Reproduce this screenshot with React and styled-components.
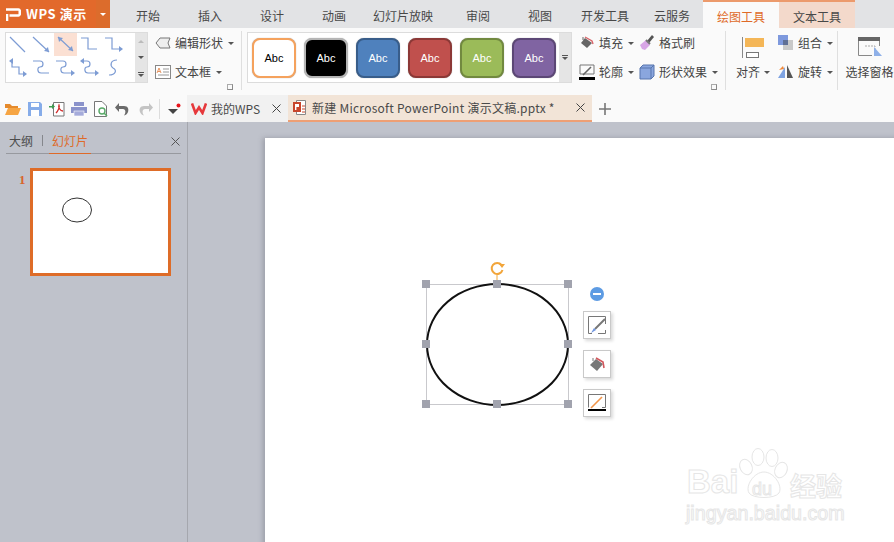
import React from "react";
import styled, { createGlobalStyle } from "styled-components";

const Global = createGlobalStyle`
  html, body { margin: 0; padding: 0; background: #bfc2cb; overflow: hidden; }
  #root { width: 894px; height: 542px; }
  * { box-sizing: border-box; }
`;
const FONT = `"Noto Sans CJK SC", "Noto Sans", sans-serif`;

const Page = styled.div`
  width: 894px; height: 542px; display: flex; flex-direction: column;
  font: 12px/16px ${FONT}; color: #444; overflow: hidden;
`;
const TopBar = styled.div`display: flex; height: 28px; background: #e2e3e5; flex: none;`;
const Logo = styled.div`
  width: 96px; display: flex; align-items: center; gap: 5px; padding-left: 6px;
  background: #e2692b; color: #fff; font: 700 13px/16px ${FONT}; letter-spacing: .55px;
`;
const LogoMenu = styled.div`
  width: 14px; margin-right: 7px; background: #dc6c2c; display: flex; align-items: center; justify-content: center;
`;
const Caret = styled.span`
  display: inline-block; width: 0; height: 0; flex: none;
  border-left: 3px solid transparent; border-right: 3px solid transparent;
  border-top: 3px solid ${p => p.$color || "#555"};
  margin-left: ${p => p.$ml ?? 1}px;
`;
const Tab = styled.div`
  width: ${p => p.$w}px; margin-right: ${p => p.$mr || 0}px; display: flex; align-items: center; justify-content: center;
  padding-top: 3px; color: ${p => p.$active ? "#df6a28" : "#484848"};
  background: ${p => p.$active ? "#fafafa" : p.$ctx ? "#f3d9cb" : "transparent"};
  border-top: ${p => p.$active || p.$ctx ? "2px solid #ec9a6c" : "none"};
`;
const Ribbon = styled.div`
  height: 67px; flex: none; display: flex; align-items: flex-start; background: #fafafa; padding: 3px 0 0 5px;
`;
const Gallery = styled.div`
  margin-top: 1px; height: 51px; display: flex; background: #fff; border: 1px solid #dcdcdc;
  width: ${p => p.$w}px; flex: none; margin-left: ${p => p.$ml || 0}px;
`;
const ShapeGrid = styled.div`
  flex: 1; display: grid; grid-template-columns: repeat(5, 24px); grid-auto-rows: 23px;
`;
const ShapeCell = styled.div`
  width: 23px; height: 23px; background: ${p => p.$on ? "#fbe0d3" : "transparent"};
  display: flex; align-items: center; justify-content: center;
`;
const ScrollCol = styled.div`
  width: 12px; flex: none; background: #e5e5e5; display: flex; flex-direction: column;
  align-items: center; justify-content: ${p => p.$center ? "center" : "space-between"};
  padding: ${p => p.$center ? "0" : "7px 0 5px"}; gap: 1px;
`;
const UpCaret = styled.span`
  width: 0; height: 0; border-left: 3px solid transparent; border-right: 3px solid transparent;
  border-bottom: 3px solid #bbb;
`;
const DownCaret = styled.span`
  width: 0; height: 0; border-left: 3px solid transparent; border-right: 3px solid transparent;
  border-top: 3px solid #555;
`;
const Bar = styled.span`width: 6px; height: 1px; background: #555;`;
const Stack = styled.div`display: flex; flex-direction: column; align-items: center; gap: 1px;`;
const Group = styled.div`
  position: relative; flex: none; height: 59px; width: ${p => p.$w}px; margin-left: ${p => p.$ml || 0}px;
  border-right: ${p => p.$sep ? "1px solid #dfdfdf" : "none"};
`;
const Launcher = styled.span`
  position: absolute; right: ${p => p.$r}px; bottom: 0; width: 6px; height: 6px;
  border: 1px solid #8a8a8a; border-top-color: #aaa; border-left-color: #aaa;
`;
const Rows = styled.div`display: grid; grid-template-columns: ${p => p.$cols}; grid-auto-rows: 24px; row-gap: 5px;`;
const Item = styled.div`display: flex; align-items: center; gap: 4px; white-space: nowrap; color: #444;`;
const PaddedItem = styled(Item)`padding-left: 7px;`;
const StyleRow = styled.div`flex: 1; display: flex; align-items: center; gap: 8px; padding-left: 4px;`;
const StyleBtn = styled.div`
  width: 44px; height: 40px; border-radius: 8px; display: flex; align-items: center; justify-content: center;
  background: ${p => p.$bg}; border: 2.5px solid ${p => p.$bd}; color: ${p => p.$fg};
  font: 11px/14px "Liberation Sans", sans-serif; box-shadow: 0 0 1px #999;
`;
const LargeTool = styled.div`
  display: flex; flex-direction: column; align-items: center; width: ${p => p.$w}px; margin-left: ${p => p.$ml || 0}px; flex: none;
`;
const LargeIcon = styled.div`height: 29px; display: flex; align-items: flex-end; padding-bottom: 2px;`;
const ToolLabel = styled.div`display: flex; align-items: center; height: 24px; white-space: nowrap; color: #444;`;
const AlignRow = styled.div`display: flex; gap: 8px; padding-left: 10px;`;
const DocBar = styled.div`display: flex; height: 27px; flex: none; background: #fafafa; align-items: stretch;`;
const Qat = styled.div`display: flex; align-items: center; gap: 6px; padding-left: 5px; width: 187px; flex: none;`;
const QatSep = styled.span`width: 1px; height: 20px; background: #ddd;`;
const DocTab = styled.div`
  display: flex; align-items: center; width: ${p => p.$w}px; flex: none;
  padding-left: ${p => p.$on ? 5 : 4}px;
  background: ${p => p.$on ? "#f2e4d7" : "#f1f1f1"};
  border-bottom: ${p => p.$on ? "2px solid #ee9f74" : "0"};
  color: #4a4a4a; white-space: nowrap; position: relative;
`;
const DocTitle = styled.span`margin-left: ${p => p.$ml}px; letter-spacing: ${p => p.$ls || 0}px;`;
const CloseBtn = styled.span`position: absolute; right: ${p => p.$r}px; top: 50%; margin-top: -5px; width: 9px; height: 9px; display: flex;`;
const Plus = styled.div`margin-left: 7px; display: flex; align-items: center;`;
const Work = styled.div`flex: 1; display: flex; background: #bfc2cb; min-height: 0;`;
const Side = styled.div`width: 188px; flex: none; border-right: 1px solid #a5a7ae; padding: 9px 6px 0 6px;`;
const SideTabs = styled.div`display: flex; align-items: center; height: 23px; border-bottom: 1px solid #97999f; position: relative;`;
const SideTab = styled.div`
  color: ${p => p.$on ? "#df6a28" : "#4c4c4c"}; height: 23px; line-height: 20px; padding: 0 3px;
  border-bottom: ${p => p.$on ? "1px solid #df6a28" : "0"}; margin-bottom: ${p => p.$on ? "-1px" : "0"};
`;
const SideDiv = styled.span`width: 1px; height: 11px; background: #85878c; margin: 0 6px 3px;`;
const Thumbs = styled.div`display: flex; align-items: flex-start; margin-top: 14px; padding-left: 13px;`;
const ThumbNo = styled.div`font: 700 13px/24px "Liberation Serif", serif; color: #d8642a; width: 11px;`;
const Thumb = styled.div`
  width: 141px; height: 108px; background: #fff; border: 3px solid #de6c28; padding: 26px 0 0 29px;
`;
const Canvas = styled.div`flex: 1; padding: 16px 0 0 77px; overflow: hidden;`;
const Slide = styled.div`
  width: 640px; height: 500px; background: #fff; position: relative; box-shadow: -2px 0 5px rgba(90,90,100,.35);
`;
const Shape = styled.div`position: absolute; left: ${426-265}px; top: ${284-138}px; width: 143px; height: 121px; border: 1px solid #c9c9cd;`;
const Ellipse = styled.div`position: absolute; inset: -2px -1px; border-radius: 50%; border: 2px solid #111;`;
const HandleLayer = styled.div`position: absolute; inset: -1px 0 0 -1px;`;
const Handle = styled.span`
  position: absolute; width: 8px; height: 8px; background: #a1a3ae;
  left: calc(${p => p.$x}% - 4px); top: calc(${p => p.$y}% - 4px);
`;
const RotateWrap = styled.div`position: absolute; left: 61px; top: -27px; width: 18px; height: 27px;`;
const Float = styled.div`position: absolute; left: ${583-265}px; top: ${287-138}px; width: 28px; display: flex; flex-direction: column; align-items: center;`;
const MinusBtn = styled.div`width: 14px; height: 14px; border-radius: 50%; background: #5d9be3; display: flex; align-items: center; justify-content: center; margin-bottom: 10px;`;
const MinusBar = styled.span`width: 8px; height: 2px; background: #fff;`;
const FloatBtn = styled.div`
  width: 28px; height: 28px; margin-bottom: 11px; background: #fff; border: 1px solid #c9c9c9;
  box-shadow: 2px 2px 3px rgba(0,0,0,.15); display: flex; align-items: center; justify-content: center;
`;
const Mark = styled.div`
  position: absolute; left: ${684-265}px; top: ${444-138}px; width: 165px; height: 82px; pointer-events: none;
  color: #fff; -webkit-text-stroke: 1px #e6e6e6;
`;
const MarkText = styled.span`
  position: absolute; left: ${p => p.$x}px; top: ${p => p.$y}px; white-space: nowrap;
  font: ${p => p.$w || 700} ${p => p.$s}px/1 ${p => p.$cjk ? FONT : '"Liberation Sans", sans-serif'};
`;
const MarkPaw = styled.svg`position: absolute; left: 0; top: 0;`;

const Ico = ({ w = 16, h = 16, children }) => <svg width={w} height={h} viewBox={`0 0 ${w} ${h}`} style={{ display: "block", flex: "none" }}>{children}</svg>;

const B = "#7d9cd4";
const Arrow = ({ x, y, dir }) => {
  const d = { r: `${x},${y} ${x-4},${y-3} ${x-4},${y+3}`, se: `${x},${y} ${x-5},${y-1} ${x-1},${y-5}`, nw: `${x},${y} ${x+5},${y+1} ${x+1},${y+5}`, l: `${x},${y} ${x+4},${y-3} ${x+4},${y+3}` }[dir];
  return <polygon points={d} fill={B} />;
};
const shapes = [
  { p: "M4 4L19 19" },
  { p: "M3 4L19 19", a: [{ x: 19, y: 19, dir: "se" }] },
  { p: "M4 4L19 18", a: [{ x: 19, y: 18, dir: "se" }, { x: 4, y: 4, dir: "nw" }], on: true },
  { p: "M3 5H10V16H19" },
  { p: "M3 5H10V16H17", a: [{ x: 21, y: 16, dir: "r" }] },
  { p: "M6 5V11H13V18H17", a: [{ x: 3, y: 5, dir: "l" }, { x: 21, y: 18, dir: "r" }] },
  { p: "M3 5H10C14 5 14 11 10 11C7 11 7 17 11 17H19" },
  { p: "M2 5H9C13 5 13 11 9 11C6 11 6 17 10 17H17", a: [{ x: 21, y: 17, dir: "r" }] },
  { p: "M5 5H9C13 5 13 11 9 11C6 11 6 17 10 17H17", a: [{ x: 2, y: 5, dir: "l" }, { x: 21, y: 17, dir: "r" }] },
  { p: "M15 4C8 4 8 10 11 12C15 14 14 19 7 19" },
];
const ShapeIcon = ({ p, a = [] }) => (
  <Ico w={23} h={23}><path d={p} fill="none" stroke={B} strokeWidth="1.2" />{a.map((v, i) => <Arrow key={i} {...v} />)}</Ico>
);

const X = ({ c = "#444" }) => <Ico w={9} h={9}><path d="M.5 .5L8.5 8.5M8.5 .5L.5 8.5" stroke={c} strokeWidth="1" /></Ico>;

const styles = [
  ["#fff", "#f5a25d", "#000"], ["#000", "#b5b5b5", "#fff"], ["#4f81bd", "#385d8a", "#fff"],
  ["#c0504d", "#8c3836", "#fff"], ["#9bbb59", "#71893f", "#fff"], ["#8064a2", "#5c4776", "#fff"],
];

const FillIcon = () => <Ico><path d="M6 3L13 8L8 13L2 8Z" fill="#666" /><path d="M6 2L13 6L14 9" fill="none" stroke="#d9656a" strokeWidth="1.4" /><path d="M4 5V2" stroke="#666" /></Ico>;
const OutlineIcon = () => <Ico><path d="M1 1H15V10H1Z" fill="none" stroke="#777" /><path d="M4 11L12 3" stroke="#666" strokeWidth="1.6" /><rect y="13" width="16" height="3" fill="#000" /></Ico>;
const BrushIcon = () => <Ico><path d="M1 10L7 5L11 10L6 15L3 14Z" fill="#d8a6e6" /><path d="M8 6L10 8L15 2L13 0Z" fill="#555" /><path d="M7 5L11 9" stroke="#777" strokeWidth="2" /></Ico>;
const CubeIcon = () => <Ico><path d="M1 4L4 1H15V12L12 15H1Z" fill="#8aa6de" stroke="#5775ad" /><path d="M1 4H12V15M12 4L15 1" fill="none" stroke="#5775ad" /></Ico>;
const AlignIcon = () => <Ico w={22} h={21}><path d="M.5 0V21" stroke="#888" /><rect x="3" y="1" width="19" height="9" fill="#f4b657" /><rect x="4.5" y="15.5" width="12" height="5" fill="#fff" stroke="#777" /></Ico>;
const GroupIcon = () => <Ico><rect x="0" y="0" width="10" height="10" fill="#7e99dd" /><rect x="5" y="5" width="10" height="10" fill="#c9c9c9" /><rect x="5" y="5" width="5" height="5" fill="#5f6f95" /></Ico>;
const RotateIcon = () => <Ico><path d="M0 14L7 3V14Z" fill="#7ea3e2" /><path d="M9 1L15 14H9Z" fill="#555" /><path d="M1 6L5 2L6 5Z" fill="#f08a3c" /></Ico>;
const PaneIcon = () => <Ico w={24} h={21}><rect x="0" y="0" width="22" height="4" fill="#666" /><path d="M.5 4V18.5H14M21.5 4V9" fill="none" stroke="#888" /><path d="M7 9H17V16" fill="none" stroke="#aaa" strokeDasharray="2 1" /><path d="M16 10L24 19H16Z" fill="#8fb0e8" /></Ico>;

const OpenIcon = () => <Ico><path d="M0 3H5L7 5H13V7H0Z" fill="#e58a2c" /><path d="M0 14L3 7H16L13 14Z" fill="#f6a544" /></Ico>;
const SaveIcon = () => <Ico><path d="M1 1H13L15 3V15H1Z" fill="#86ace9" /><rect x="4" y="2" width="8" height="4" fill="#fff" /><rect x="4" y="9" width="8" height="6" fill="#fff" /></Ico>;
const PdfIcon = () => <Ico><path d="M4.5 1.5H15V15H4.5Z" fill="#fff" stroke="#777" /><path d="M7 12C9 10 11 6 10 4C9 6 11 10 14 10" fill="none" stroke="#d22c2c" strokeWidth="1.3" /><path d="M0 5H3V3L6 5.5L3 8V6.5H0Z" fill="#3d9b50" /></Ico>;
const PrintIcon = () => <Ico><rect x="3" y="1" width="10" height="4" fill="#8b93cb" /><rect x="0" y="6" width="16" height="6" fill="#8b93cb" /><rect x="3" y="10" width="10" height="5" fill="#a5abda" stroke="#fff" strokeWidth=".6" /></Ico>;
const PreviewIcon = () => <Ico><path d="M1.5 .5H9L13.5 5V15.5H1.5Z" fill="#fff" stroke="#777" /><circle cx="9" cy="10" r="3" fill="none" stroke="#59a968" strokeWidth="1.4" /><path d="M11 12L14 15" stroke="#59a968" strokeWidth="1.6" /></Ico>;
const UndoPath = ({ c }) => <path d="M4 5H9C13 5 14 8 13 11C12.6 12.5 11 14 9 14.5C11 12 11 8 8 8H4V11L0 6.5L4 2Z" fill={c} />;
const UndoIcon = ({ c }) => <Ico><UndoPath c={c} /></Ico>;
const RedoIcon = ({ c }) => <Ico><g transform="translate(16 0) scale(-1 1)"><UndoPath c={c} /></g></Ico>;
const QatMenu = () => <Ico w={15} h={12}><path d="M2 6H12L7 11Z" fill="#444" /><circle cx="12.5" cy="2.5" r="2" fill="#e8141c" /></Ico>;
const WpsLogo = () => <Ico w={16} h={13}><path d="M1 1.5L4.5 11L8 5.5L11.5 11L15 1.5" fill="none" stroke="#e6383b" strokeWidth="2.6" /></Ico>;
const PptIcon = () => <Ico w={13} h={15}><path d="M3.5 .5H12.5V14.5H3.5Z" fill="#fff" stroke="#888" /><rect x="0" y="2" width="8" height="10" fill="#c8452b" /><rect x="2" y="4" width="4" height="3" fill="#fff" /><rect x="2" y="4" width="1.4" height="6" fill="#fff" /><path d="M9 6H12M9 9H12M9 12H12" stroke="#c8452b" /></Ico>;
const EditShapeIcon = () => <Ico w={16} h={14}><path d="M1 7L5 2H15L13 7L15 12H5Z" fill="#eee" stroke="#777" /></Ico>;
const TextBoxIcon = () => <Ico w={16} h={14}><rect x=".5" y=".5" width="15" height="13" fill="#fff" stroke="#888" /><path d="M2 8L4 3L6 8M3 6.5H5" fill="none" stroke="#e07a3a" strokeWidth=".8" /><path d="M8 4H14M8 7H14M3 10H14" stroke="#999" /></Ico>;

export default function App() {
  return (
    <Page>
      <Global />
      <TopBar>
        <Logo>
          <Ico w={15} h={14}><path d="M0 2.5H12.5C14.5 2.5 14.5 8.5 12.5 8.5H3.5M1 7V14" fill="none" stroke="#fff" strokeWidth="2.6" /></Ico>
          WPS 演示
        </Logo>
        <LogoMenu><Caret $color="#fff" $ml={0} /></LogoMenu>
        <Tab $w={62}>开始</Tab>
        <Tab $w={62}>插入</Tab>
        <Tab $w={62}>设计</Tab>
        <Tab $w={62}>动画</Tab>
        <Tab $w={76}>幻灯片放映</Tab>
        <Tab $w={74}>审阅</Tab>
        <Tab $w={50}>视图</Tab>
        <Tab $w={80}>开发工具</Tab>
        <Tab $w={54} $mr={4}>云服务</Tab>
        <Tab $w={76} $active>绘图工具</Tab>
        <Tab $w={76} $ctx>文本工具</Tab>
      </TopBar>
      <Ribbon>
        <Gallery $w={143}>
          <ShapeGrid>
            {shapes.map((s, i) => <ShapeCell key={i} $on={s.on}><ShapeIcon p={s.p} a={s.a} /></ShapeCell>)}
          </ShapeGrid>
          <ScrollCol><UpCaret /><DownCaret /><Stack><Bar /><DownCaret /></Stack></ScrollCol>
        </Gallery>
        <Group $w={94} $sep>
          <Rows $cols="1fr">
            <PaddedItem><EditShapeIcon />编辑形状<Caret /></PaddedItem>
            <PaddedItem><TextBoxIcon />文本框<Caret /></PaddedItem>
          </Rows>
          <Launcher $r={8} />
        </Group>
        <Gallery $w={325} $ml={5}>
          <StyleRow>
            {styles.map(([bg, bd, fg], i) => <StyleBtn key={i} $bg={bg} $bd={bd} $fg={fg}>Abc</StyleBtn>)}
          </StyleRow>
          <ScrollCol $center><Stack><Bar /><DownCaret /></Stack></ScrollCol>
        </Gallery>
        <Group $w={147} $ml={7} $sep>
          <Rows $cols="60px 86px">
            <Item><FillIcon />填充<Caret /></Item>
            <Item><BrushIcon />格式刷</Item>
            <Item><OutlineIcon />轮廓<Caret /></Item>
            <Item><CubeIcon />形状效果<Caret /></Item>
          </Rows>
          <Launcher $r={8} />
        </Group>
        <Group $w={112} $sep>
          <AlignRow>
            <LargeTool $w={34}>
              <LargeIcon><AlignIcon /></LargeIcon>
              <ToolLabel>对齐<Caret $ml={4} /></ToolLabel>
            </LargeTool>
            <Rows $cols="60px">
              <Item><GroupIcon />组合<Caret /></Item>
              <Item><RotateIcon />旋转<Caret /></Item>
            </Rows>
          </AlignRow>
        </Group>
        <LargeTool $w={49} $ml={7}>
          <LargeIcon><PaneIcon /></LargeIcon>
          <ToolLabel>选择窗格</ToolLabel>
        </LargeTool>
      </Ribbon>
      <DocBar>
        <Qat>
          <OpenIcon /><SaveIcon /><PdfIcon /><PrintIcon /><PreviewIcon /><UndoIcon c="#6b6b6b" /><RedoIcon c="#c4c4c4" />
          <QatSep />
          <QatMenu />
        </Qat>
        <DocTab $w={101}>
          <WpsLogo /><DocTitle $ml={4}>我的WPS</DocTitle>
          <CloseBtn $r={7}><X /></CloseBtn>
        </DocTab>
        <DocTab $w={304} $on>
          <PptIcon /><DocTitle $ml={6} $ls={0.25}>新建 Microsoft PowerPoint 演示文稿.pptx *</DocTitle>
          <CloseBtn $r={7}><X /></CloseBtn>
        </DocTab>
        <Plus><Ico w={12} h={12}><path d="M6 0V12M0 6H12" stroke="#777" strokeWidth="1.6" /></Ico></Plus>
      </DocBar>
      <Work>
        <Side>
          <SideTabs>
            <SideTab>大纲</SideTab>
            <SideDiv />
            <SideTab $on>幻灯片</SideTab>
            <CloseBtn $r={1}><X c="#555" /></CloseBtn>
          </SideTabs>
          <Thumbs>
            <ThumbNo>1</ThumbNo>
            <Thumb><Ico w={30} h={26}><ellipse cx="15" cy="13" rx="14.5" ry="12" fill="#fff" stroke="#333" /></Ico></Thumb>
          </Thumbs>
        </Side>
        <Canvas>
          <Slide>
            <Shape>
              <Ellipse />
              <RotateWrap>
                <Ico w={18} h={27}>
                  <path d="M9 17V27" stroke="#f2a93b" />
                  <path d="M13.5 7A5.5 5.5 0 1 0 14.5 12" fill="none" stroke="#f2a53a" strokeWidth="2" />
                  <path d="M11 6H17L14 10Z" fill="#f2a53a" />
                </Ico>
              </RotateWrap>
              <HandleLayer>
                {[[0,0],[50,0],[100,0],[0,50],[100,50],[0,100],[50,100],[100,100]].map(([x, y], i) => <Handle key={i} $x={x} $y={y} />)}
              </HandleLayer>
            </Shape>
            <Float>
              <MinusBtn><MinusBar /></MinusBtn>
              <FloatBtn>
                <Ico w={18} h={18}><path d="M.5 17.5V.5H17.5V8M17.5 14V17.5H10M.5 17.5H4" fill="none" stroke="#777" /><path d="M7 13L17 3" stroke="#777" strokeWidth="2" /><path d="M3 17L6 12L8 14Z" fill="#6f95e0" /></Ico>
              </FloatBtn>
              <FloatBtn>
                <Ico w={16} h={16}><path d="M7 3L14 8L8 15L1 9Z" fill="#777" /><path d="M7 2L14 6L15 12" fill="none" stroke="#d2575c" strokeWidth="1.6" /><path d="M4 5V2" stroke="#777" /></Ico>
              </FloatBtn>
              <FloatBtn>
                <Ico w={18} h={18}><path d="M.5 13.5V.5H17.5V13.5H14" fill="none" stroke="#777" /><path d="M3 14L14 3" stroke="#f2954a" strokeWidth="1.6" /><rect y="15" width="18" height="2" fill="#000" /></Ico>
              </FloatBtn>
            </Float>
            <Mark>
              <MarkPaw width="165" height="82" viewBox="0 0 165 82">
                <g fill="#fff" stroke="#e6e6e6" strokeWidth="1">
                  <ellipse cx="62" cy="23" rx="6" ry="8" transform="rotate(-25 62 23)" />
                  <ellipse cx="74" cy="13" rx="6" ry="8.5" />
                  <ellipse cx="88" cy="14" rx="6" ry="8.5" />
                  <ellipse cx="97" cy="26" rx="6" ry="8" transform="rotate(25 97 26)" />
                  <path d="M80 28C90 28 99 42 95 49C91 55 69 55 65 49C61 42 70 28 80 28Z" />
                </g>
              </MarkPaw>
              <MarkText $x={3} $y={21} $s={33}>Bai</MarkText>
              <MarkText $x={68} $y={36} $s={18} $w={400}>du</MarkText>
              <MarkText $x={106} $y={28} $s={26} $cjk>经验</MarkText>
              <MarkText $x={2} $y={60} $s={19.7} $w={400}>jingyan.baidu.com</MarkText>
            </Mark>
          </Slide>
        </Canvas>
      </Work>
    </Page>
  );
}
